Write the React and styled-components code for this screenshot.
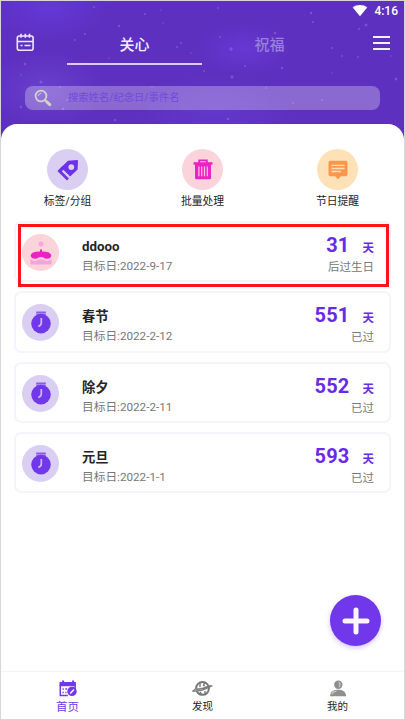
import React from 'react';
import styled, { createGlobalStyle } from 'styled-components';

const colors = {
    purple: '#7137ea',
    header: '#5d30bf',
    lilac: '#dacff3',
    pink: '#fbd3da',
    magenta: '#ee22c4',
    line: '#f5f3fe',
    text: '#242424',
    muted: '#777777'
};

const GlobalStyle = createGlobalStyle`
    * {
        box-sizing: border-box;
    }

    body {
        margin: 0;
        font-family: Roboto, "Noto Sans CJK SC", sans-serif;
    }

    svg {
        display: block;
    }
`;

const Screen = styled.div`
    display: flex;
    flex-direction: column;
    width: 405px;
    height: 720px;
    border: 1px solid #d6d6d6;
    background: #ffffff;
    color: ${colors.text};
    position: relative;
    overflow: hidden;
`;

const Header = styled.header`
    position: relative;
    flex: none;
    height: 137px;
    background:
        radial-gradient(ellipse 60px 34px at 48px 8px, rgba(103, 62, 229, 0.6), transparent),
        radial-gradient(ellipse 48px 26px at 243px 48px, rgba(112, 65, 235, 0.5), transparent),
        radial-gradient(ellipse 60px 38px at 45px 88px, rgba(119, 79, 220, 0.5), transparent),
        radial-gradient(ellipse 80px 36px at 215px 108px, rgba(107, 65, 222, 0.45), transparent),
        ${colors.header};
`;

const Stars = styled.svg`
    position: absolute;
    top: 0;
    left: 0;
`;

const StatusBar = styled.div`
    position: relative;
    display: flex;
    justify-content: flex-end;
    align-items: center;
    gap: 6px;
    height: 19px;
    padding-right: 6px;
    color: #ffffff;
    font-size: 12px;
    font-weight: 500;
`;

const TopBar = styled.div`
    position: relative;
    display: flex;
    height: 45px;
    padding: 0 14px 0 15px;
    justify-content: space-between;
`;

const IconButton = styled.div`
    padding-top: ${props => props.$top}px;
`;

const Tabs = styled.div`
    display: flex;
    width: 270px;
    margin-right: 15px;
    margin-left: 11px;
`;

const Tab = styled.div`
    flex: 1;
    padding-top: 15px;
    text-align: center;
    font-size: 15px;
    font-weight: 500;
    line-height: 21px;
    color: ${props => (props.$active ? '#f3edff' : '#9980d8')};
    border-bottom: 2px solid ${props => (props.$active ? '#d9ccf5' : 'transparent')};
`;

const Search = styled.div`
    position: relative;
    display: flex;
    align-items: center;
    height: 24px;
    margin: 21px 24px 0;
    padding-left: 9px;
    gap: 16px;
    border-radius: 8px;
    background: rgba(255, 255, 255, 0.28);
    color: #7448df;
    font-size: 10.3px;
    line-height: 24px;
`;

const Sheet = styled.main`
    position: relative;
    flex: 1;
    margin-top: -14px;
    padding-top: 25px;
    border-radius: 16px 16px 0 0;
    background: #ffffff;
`;

const Actions = styled.div`
    display: flex;
    height: 72px;
    margin: 0 -1px;
`;

const Action = styled.div`
    display: flex;
    flex-direction: column;
    align-items: center;
    flex: 1;
    font-size: 10.8px;
    line-height: 16px;
    gap: 4px;
`;

const Circle = styled.div`
    display: flex;
    flex: none;
    align-items: center;
    justify-content: center;
    width: ${props => props.$size}px;
    height: ${props => props.$size}px;
    border-radius: 50%;
    background: ${props => props.$color};
`;

const List = styled.div`
    display: flex;
    flex-direction: column;
    gap: 9px;
    padding: 0 13px;
`;

const Card = styled.div`
    position: relative;
    display: flex;
    height: 61.3px;
    padding: 11px 15px 0 6px;
    border: 2px solid ${colors.line};
    border-radius: 7px;
`;

const Info = styled.div`
    flex: 1;
    margin-left: 23px;
`;

const Name = styled.div`
    margin-top: 4px;
    font-size: 13.3px;
    font-weight: 700;
    line-height: 17px;
`;

const Date = styled.div`
    margin-top: 3px;
    color: ${colors.muted};
    font-size: 11.7px;
    line-height: 17px;
`;

const Count = styled.div`
    display: flex;
    flex-direction: column;
    align-items: flex-end;
`;

const Days = styled.div`
    display: flex;
    align-items: baseline;
    height: 24px;
    color: #672be8;
    font-size: 20px;
    font-weight: 700;
    line-height: 22px;
    gap: 13px;
    letter-spacing: 0.2px;
`;

const Unit = styled.span`
    font-size: 11.5px;
    letter-spacing: 0;
`;

const Note = styled.div`
    margin-top: 1px;
    color: ${colors.muted};
    font-size: 11.5px;
    line-height: 17px;
`;

// Sits over the first card and spills past its lower edge
const Highlight = styled.div`
    position: absolute;
    top: 1px;
    left: 1.5px;
    width: 371px;
    height: 63px;
    border: 3px solid #fb1518;
`;

const AddButton = styled.div`
    position: absolute;
    right: 23px;
    bottom: 73px;
    display: flex;
    align-items: center;
    justify-content: center;
    width: 51px;
    height: 51px;
    border-radius: 50%;
    background: ${colors.purple};
    box-shadow: 0 2px 5px rgba(113, 55, 234, 0.3);
`;

const Nav = styled.nav`
    display: flex;
    height: 48px;
    margin: 0 -1px;
    border-top: 1px solid #f3f3f3;
`;

const NavItem = styled.div`
    display: flex;
    flex: 1;
    flex-direction: column;
    align-items: center;
    padding-top: 8px;
    gap: 2px;
    font-size: ${props => (props.$active ? 11.5 : 10.5)}px;
    line-height: 16px;
    color: ${props => (props.$active ? colors.purple : colors.text)};
`;

const stars = [
    [93, 6, 1], [144, 13, 1], [84, 33, 1], [162, 22, 0.8], [176, 46, 1], [118, 25, 1.2],
    [74, 39, 1], [24, 63, 1.2], [108, 57, 0.8], [40, 81, 1.6], [59, 86, 1], [20, 74, 0.8],
    [114, 119, 1.2], [66, 99, 1], [62, 108, 1.3], [180, 42, 1.1], [190, 52, 0.8], [217, 7, 1],
    [219, 36, 1], [230, 48, 1.7], [274, 32, 1.3], [244, 65, 1], [231, 76, 1.5], [281, 67, 1.2],
    [310, 12, 1.3], [312, 21, 1], [358, 28, 1], [365, 24, 1.5], [331, 47, 1], [341, 55, 1],
    [357, 56, 1], [395, 78, 1.4], [321, 99, 1], [331, 72, 0.8], [227, 118, 1.3], [292, 102, 1],
    [20, 106, 1.2], [151, 86, 0.8], [160, 9, 0.8], [390, 55, 0.8], [203, 70, 1], [265, 87, 0.9]
];

const CalendarIcon = () => (
    <svg width='19' height='19' viewBox='0 0 19 19' fill='none' stroke='#eee6ff' strokeWidth='1.6'>
        <rect x='1.3' y='3' width='15.8' height='14.2' rx='2' />
        <path d='M1.3 8.5h15.8M5 .8v4M9.3 .8v4M13.5 .8v4' />
        <path d='M4.5 12.6h2M8.5 12.6h6' strokeWidth='1.5' />
    </svg>
);

const MenuIcon = () => (
    <svg width='17' height='16' viewBox='0 0 17 16' stroke='#f5f0ff' strokeWidth='2'>
        <path d='M0 2h17M0 8h17M0 14h17' />
    </svg>
);

const WifiIcon = () => (
    <svg width='16' height='13' viewBox='0 0 16 13' fill='#ffffff'>
        <path d='M.7 3.4C4.6.3 11.3.3 15.2 3.4L8 12.3z' />
    </svg>
);

const SearchIcon = () => (
    <svg width='18' height='18' viewBox='0 0 18 18' fill='none' stroke='#d3d3cc' strokeLinecap='round'>
        <circle cx='7' cy='7' r='5.4' strokeWidth='1.8' />
        <path d='M4.2 6.7Q4.6 4.4 7 4.1' strokeWidth='1' />
        <path d='M11 11l1.4 1.4' strokeWidth='1.8' />
        <path d='M12.8 12.8l3 2.8' strokeWidth='3' />
    </svg>
);

const TagIcon = () => (
    <svg width='22' height='22' viewBox='0 0 22 22' fill='#6c32ea'>
        <path fillRule='evenodd' d='M11 1.8L20 .9Q21 .9 21 1.9L20.6 10.5 13.2 17.6 4 8.4zM14.3 5.2a2.9 2.9 0 1 0 0 5.8 2.9 2.9 0 0 0 0-5.8z' />
        <path d='M1.6 11.2L11 20.4' stroke='#6c32ea' strokeWidth='2.8' />
        <path d='M.6 12l4.2-4.4 2.2 2.2-3 3.6z' />
    </svg>
);

const TrashIcon = () => (
    <svg width='20' height='21' viewBox='0 0 20 21' fill='none' stroke={colors.magenta}>
        <path d='M.5 4.4h19' strokeWidth='2.4' />
        <path d='M6.2 4V1.4h7.6V4' strokeWidth='1.9' />
        <path d='M2 5h16v14q0 1.2-1.2 1.2H3.2Q2 20.2 2 19z' fill={colors.magenta} stroke='none' />
        <path d='M5.9 7.6v9.6M8.7 7.6v9.6M11.5 7.6v9.6M14.3 7.6v9.6' stroke='#f9c6e0' strokeWidth='1.2' />
    </svg>
);

const MessageIcon = () => (
    <svg width='20' height='20' viewBox='0 0 20 20'>
        <path fill='#ff964c' d='M2.3.8h15.4q1.8 0 1.8 1.8v11.8q0 1.8-1.8 1.8h-4.8L10 19.3 7.1 16.2H2.3q-1.8 0-1.8-1.8V2.6Q.5.8 2.3.8z' />
        <path stroke='#fee1b6' strokeWidth='1.4' d='M3.5 5.4h13M3.5 8.5h13M3.5 11.5h9.5' />
    </svg>
);

const CakeIcon = () => (
    <svg width='22' height='24' viewBox='0 0 22 24'>
        <circle cx='11' cy='3.1' r='2.5' fill='#f6a5dc' />
        <path fill='#f5a3dc' d='M.5 18Q3.8 21.4 7.3 19.3 11 17 14.7 19.3 18.2 21.4 21.5 18v4.5q0 1-1 1h-19q-1 0-1-1z' />
        <path fill={colors.magenta} d='M10 8.6h2v2q9.3.1 9.3 4.2-.5 3-4.6 3-2.1-.1-3.2-1.3-2.5-1-5 0-1.1 1.2-3.2 1.300Q1.200 17.8.7 14.8.7 10.700 10 10.600z' />
    </svg>
);

const WatchIcon = () => (
    <svg width='20' height='23' viewBox='0 0 20 23'>
        <path fill='#875bec' d='M5.2.5h9.6v4H5.2z' />
        <path stroke='#cbb9f6' strokeWidth='.7' d='M5 2.8h10' />
        <circle cx='10' cy='12.6' r='9.8' fill={colors.purple} />
        <path fill='none' stroke='#cbbafa' strokeWidth='1.7' d='M10.3 7v5.1q0 2.5-3 3.3' />
    </svg>
);

const PlusIcon = () => (
    <svg width='28' height='28' viewBox='0 0 28 28' stroke='#f9f6ff' strokeWidth='5' strokeLinecap='round'>
        <path d='M14 3v22M3 14h22' />
    </svg>
);

const HomeIcon = () => (
    <svg width='18' height='17' viewBox='0 0 18 17'>
        <path fill={colors.purple} d='M.5 2h2.6V.5h2V2h8V.5h2V2h1.8v4.2H.5z' />
        <path fill='none' stroke={colors.purple} strokeWidth='1.5' d='M1.3 5v10.5h7.5M16.1 5v4' />
        <path stroke={colors.purple} strokeWidth='1.4' d='M3.5 9h1.3M3.5 12.5h1.3M6.3 9h1.7M6.3 12.5h1.2' />
        <circle cx='13' cy='11.4' r='4.7' fill={colors.purple} />
        <path stroke='#ffffff' strokeWidth='1.4' d='M11.2 13.5l3.8-4' />
    </svg>
);

const PlanetIcon = () => (
    <svg width='21' height='17' viewBox='0 0 21 17' fill='none' stroke='#777777'>
        <circle cx='10.5' cy='8.4' r='6.4' strokeWidth='2' />
        <path d='M8 3v4M13 3.2q-3 2 0 3M8 12l2 3M13 11v3' strokeWidth='1.4' />
        <path d='M4 8.4L.8 11.1Q9.5 11.5 17 7.3L20.3 5.9 16.5 5.8' fill='#dddddd' strokeWidth='1.1' />
        <path d='M4 9.2Q11 9.5 17 6.3' strokeWidth='1.7' />
    </svg>
);

const UserIcon = () => (
    <svg width='18' height='17' viewBox='0 0 18 17' fill='#8e8e8e'>
        <circle cx='9.3' cy='4.8' r='4.2' />
        <path d='M1 16.2q.3-5.5 6.3-6.4h3.8q5.6.9 6.1 6.4z' />
        <path d='M9.5 2q2.6 1.2.6 5.2M3 14.2q1-2.9 4.6-3' fill='none' stroke='#c8c8c8' strokeWidth='1.3' />
    </svg>
);

const actions = [
    { label: '标签/分组', icon: <TagIcon />, color: colors.lilac },
    { label: '批量处理', icon: <TrashIcon />, color: colors.pink },
    { label: '节日提醒', icon: <MessageIcon />, color: '#fee1b6' }
];

const events = [
    { name: 'ddooo', date: '2022-9-17', days: 31, note: '后过生日', birthday: true },
    { name: '春节', date: '2022-2-12', days: 551, note: '已过' },
    { name: '除夕', date: '2022-2-11', days: 552, note: '已过' },
    { name: '元旦', date: '2022-1-1', days: 593, note: '已过' }
];

const EventCard = ({ name, date, days, note, birthday }) => (
    <Card>
        <Circle $size={37} $color={birthday ? colors.pink : colors.lilac}>
            {birthday ? <CakeIcon /> : <WatchIcon />}
        </Circle>
        <Info>
            <Name>{name}</Name>
            <Date>目标日:{date}</Date>
        </Info>
        <Count>
            <Days>{days}<Unit>天</Unit></Days>
            <Note>{note}</Note>
        </Count>
        {birthday && <Highlight />}
    </Card>
);

export default class App extends React.Component {
    render() {
        return (
            <Screen>
                <GlobalStyle />
                <Header>
                    <Stars width='403' height='137' fill='#9d7bf2' fillOpacity='0.45'>
                        {stars.map(([x, y, r]) => <circle key={`${x}-${y}`} cx={x} cy={y} r={r} />)}
                    </Stars>
                    <StatusBar><WifiIcon />4:16</StatusBar>
                    <TopBar>
                        <IconButton $top={13}><CalendarIcon /></IconButton>
                        <Tabs>
                            <Tab $active>关心</Tab>
                            <Tab>祝福</Tab>
                        </Tabs>
                        <IconButton $top={15}><MenuIcon /></IconButton>
                    </TopBar>
                    <Search><SearchIcon />搜索姓名/纪念日/事件名</Search>
                </Header>
                <Sheet>
                    <Actions>
                        {actions.map(({ label, icon, color }) => (
                            <Action key={label}>
                                <Circle $size={41} $color={color}>{icon}</Circle>
                                {label}
                            </Action>
                        ))}
                    </Actions>
                    <List>
                        {events.map(event => <EventCard key={event.name} {...event} />)}
                    </List>
                </Sheet>
                <Nav>
                    <NavItem $active><HomeIcon />首页</NavItem>
                    <NavItem><PlanetIcon />发现</NavItem>
                    <NavItem><UserIcon />我的</NavItem>
                </Nav>
                <AddButton><PlusIcon /></AddButton>
            </Screen>
        );
    }
}
